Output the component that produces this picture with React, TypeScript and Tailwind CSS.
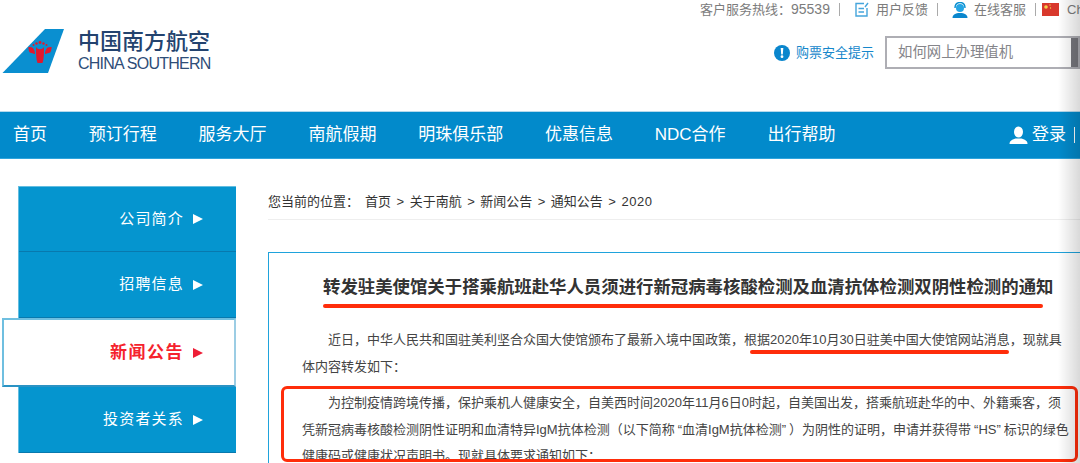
import React from "react";

const font = { fontFamily: '"Liberation Sans","Noto Sans CJK SC",sans-serif' };

function Tail() {
  return (
    <svg width="66" height="46" viewBox="0 0 66 46" className="shrink-0">
      <polygon points="45,0 64,0 48,44 2.500,44" fill="#0a8fd0" />
      <g fill="#e2182d">
        <path d="M36 18C36 24 36 30 37.500 34H42.500C44 30 44 24 44 18C42 21 38 21 36 18z" />
        <path d="M35 25C35 20 32 17 28 18.500C29 18.500 28 24 31.500 24C33 24 33 25 35 25z" />
        <path d="M45 25C45 20 48 17 52 18.500C51 18.500 52 24 48.500 24C47 24 47 25 45 25z" />
        <circle cx="40" cy="13.500" r="1.400" />
        <circle cx="36.500" cy="14.500" r="1.200" />
        <circle cx="43.500" cy="14.500" r="1.200" />
        <circle cx="33.500" cy="16" r="1" />
        <circle cx="46.500" cy="16" r="1" />
      </g>
    </svg>
  );
}

function Divider() {
  return <span className="block w-px h-[13px] bg-[#aaaaaa] shrink-0" />;
}

function TopBar() {
  return (
    <div className="h-[19px] flex items-center text-[13px] text-[#7c7c7c] whitespace-nowrap overflow-hidden">
      <span className="w-[130px] shrink-0">
        客户服务热线：<span className="text-[14px]">95539</span>
      </span>
      <span className="ml-[9px]"><Divider /></span>
      <svg width="14" height="15" viewBox="0 0 14 15" className="ml-[15px] shrink-0" fill="none" stroke="#45a5dc" strokeWidth="1.400">
        <path d="M9 1.500H1v12.500h11V6" />
        <path d="M3.500 6.500h5.500M3.500 10h5.500" />
        <path d="M10 5l3-4" />
      </svg>
      <span className="ml-[7px] w-[53px] shrink-0">用户反馈</span>
      <span className="ml-[8px]"><Divider /></span>
      <svg width="16" height="16" viewBox="0 0 16 16" className="ml-[14px] shrink-0">
        <path d="M3 6C3 2 5.500 .5 8 .5S13 2 13 6" fill="none" stroke="#0a8fd0" strokeWidth="1.400" />
        <circle cx="8" cy="6" r="4" fill="#25a5e4" />
        <path d="M0.500 16c0-3.500 3-5 7.500-5s7.500 1.500 7.500 5z" fill="#0a86cd" />
      </svg>
      <span className="ml-[6px] w-[53px] shrink-0">在线客服</span>
      <span className="ml-[8px]"><Divider /></span>
      <svg width="17" height="13" viewBox="0 0 17 13" className="ml-[6px] shrink-0">
        <rect width="17" height="13" fill="#d8382c" />
        <circle cx="4" cy="4" r="1.800" fill="#f4d24a" />
        <circle cx="8" cy="2" r=".7" fill="#f4d24a" />
        <circle cx="8.500" cy="5" r=".7" fill="#f4d24a" />
      </svg>
      <span className="ml-[8px]">Ch</span>
    </div>
  );
}

function Header() {
  return (
    <div className="h-[111px] flex">
      <div className="w-[700px] shrink-0 flex pt-[29px] items-start">
        <Tail />
        <div className="ml-[12px] -mt-[1px] flex flex-col text-[#23436f] leading-none">
          <span className="text-[22px] h-[26px] font-medium leading-[26px] pt-[1px]">中国南方航空</span>
          <span className="text-[16px] mt-[2px] tracking-[-0.75px] whitespace-nowrap text-[#2e4d78]">CHINA SOUTHERN</span>
        </div>
      </div>
      <div className="w-[380px] shrink-0">
        <TopBar />
        <div className="mt-[17px] flex items-center">
          <svg width="16" height="16" viewBox="0 0 16 16" className="ml-[74px] shrink-0">
            <circle cx="8" cy="8" r="8" fill="#0a86cd" />
            <path d="M6.700 3h2.600l-.5 6.500H7.200z" fill="#ffffff" />
            <circle cx="8" cy="11.700" r="1.400" fill="#ffffff" />
          </svg>
          <span className="ml-[6px] text-[13px] text-[#1687cb] whitespace-nowrap">购票安全提示</span>
          <div className="ml-[11px] w-[195px] h-[33px] border-2 border-[#aeaeb4] flex items-center justify-between pl-[11px] text-[14.400px] text-[#85858a] whitespace-nowrap shrink-0">
            如何网上办理值机
            <span className="w-[7px] h-full bg-[#77777d]" />
          </div>
        </div>
      </div>
    </div>
  );
}

const navItems = ["首页", "预订行程", "服务大厅", "南航假期", "明珠俱乐部", "优惠信息", "NDC合作", "出行帮助"];

function Nav() {
  return (
    <div className="h-[48px] bg-[#028acb] border-t border-t-[#b5d9ec] border-b border-b-[#2fa4dc] flex items-center pl-[13px] text-white text-[17px] whitespace-nowrap">
      <div className="flex gap-[41.800px] w-[996px] shrink-0">
        {navItems.map((n) => (
          <span key={n}>{n}</span>
        ))}
      </div>
      <svg width="19" height="19" viewBox="0 0 19 19" className="shrink-0 mt-[1px]" fill="#ffffff">
        <ellipse cx="9.500" cy="6" rx="4.500" ry="5.500" />
        <path d="M0.500 18c0-3 2-4 6-5.500h6c4 1.500 6 2.500 6 5.500z" />
      </svg>
      <span className="ml-[4px] w-[42px] shrink-0">登录</span>
      <span className="w-px h-[16px] bg-white shrink-0" />
    </div>
  );
}

function Tri({ red }: { red?: boolean }) {
  return (
    <svg width="10" height="10" viewBox="0 0 10 10" className="ml-[9px] shrink-0">
      <polygon points="0,0 10,5 0,10" fill={red ? "#ee1d36" : "#ffffff"} />
    </svg>
  );
}

function SideItem({ label, first }: { label: string; first?: boolean }) {
  return (
    <div className={`${first ? "h-[65px]" : "h-[66px]"} border-b border-[#0879ae] flex items-center justify-end pr-[33px] text-[15px] tracking-[1.200px] text-white`}>
      {label}
      <Tri />
    </div>
  );
}

function Sidebar() {
  return (
    <div className="w-[236px] shrink-0 pt-[27px] relative z-10">
      <div className="ml-[18px] bg-[#0595cf] border-l border-t border-[#63bde0]">
        <SideItem label="公司简介" first />
        <SideItem label="招聘信息" />
        <div className="h-[69px] -ml-[17px] relative bg-white border-2 border-[#6fbfe0] border-b-[#2b93c4] border-r-[#9ccde4] flex items-center justify-end pr-[31px] text-[17px] tracking-[1.500px] font-bold text-[#f5222d]">
          新闻公告
          <Tri red />
        </div>
        <SideItem label="投资者关系" />
      </div>
    </div>
  );
}

function Content() {
  return (
    <div className="flex-1 min-w-0 ml-[32px]">
      <div className="h-[61px] pt-[35px] border-b border-[#eeeeee] text-[13px] text-[#333333] whitespace-nowrap leading-[16px] flex">
        <span>您当前的位置：</span>
        <div className="ml-[6px] flex gap-[5.500px]">
          <span>首页</span><span>&gt;</span>
          <span>关于南航</span><span>&gt;</span>
          <span>新闻公告</span><span>&gt;</span>
          <span>通知公告</span><span>&gt;</span>
          <span className="tracking-[0.500px]">2020</span>
        </div>
      </div>
      <div className="mt-[32px] -mr-[4px] border border-[#1fa3dc] h-[260px] relative text-[13px] text-[#444444] leading-[26.500px] whitespace-nowrap">
        <h1 className="pl-[54px] pt-[20px] text-[17.400px] leading-[28px] font-bold text-[#333333]">
          转发驻美使馆关于搭乘航班赴华人员须进行新冠病毒核酸检测及血清抗体检测双阴性检测的通知
        </h1>
        <div className="pl-[33px] mt-[26px]">
          <p className="pl-[26px]">近日，中华人民共和国驻美利坚合众国大使馆颁布了最新入境中国政策，根据2020年10月30日驻美中国大使馆网站消息，现就具</p>
          <p>体内容转发如下：</p>
          <p className="pl-[26px] mt-[10px]">为控制疫情跨境传播，保护乘机人健康安全，自美西时间2020年11月6日0时起，自美国出发，搭乘航班赴华的中、外籍乘客，须</p>
          <p>
            凭新冠病毒核酸检测阴性证明和血清特异IgM抗体检测（以下简称<span className="pl-[3px]">“</span>血清IgM抗体检测<span className="pr-[3px]">”</span>）为阴性的证明，申请并获得带<span className="pl-[3px]">“</span>HS<span className="pr-[3px]">”</span>标识的绿色
          </p>
          <p>健康码或健康状况声明书。现就具体要求通知如下：</p>
        </div>
      </div>
    </div>
  );
}

export default function App() {
  return (
    <div className="relative w-[1080px] h-[463px] overflow-hidden bg-white" style={font}>
      <Header />
      <Nav />
      <div className="flex h-[304px] overflow-hidden">
        <Sidebar />
        <Content />
      </div>
      {/* hand-drawn annotations lying over the page */}
      <div className="absolute left-[323px] top-[304px] w-[720px] h-[4px] rounded-full bg-[#ff2d0a]" />
      <div className="absolute left-[750px] top-[350px] w-[259px] h-[4px] rounded-full bg-[#ff2d0a]" />
      <div className="absolute left-[281px] top-[386px] w-[797px] h-[76px] rounded-[6px] border-[3px] border-[#ff2d0a]" />
      <div className="absolute right-0 top-0 w-[22px] h-full bg-gradient-to-r from-transparent to-black/15" />
    </div>
  );
}
